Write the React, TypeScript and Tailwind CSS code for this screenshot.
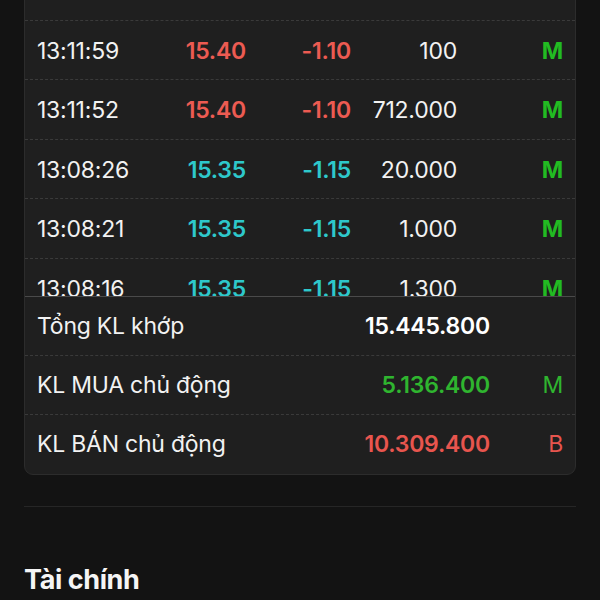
import React from 'react'

type Trade = {
    time: string
    price: string
    change: string
    volume: string
    side: string
    tone: 'down' | 'floor'
}

const trades: Trade[] = [
    { time: '13:11:59', price: '15.40', change: '-1.10', volume: '100', side: 'M', tone: 'down' },
    { time: '13:11:52', price: '15.40', change: '-1.10', volume: '712.000', side: 'M', tone: 'down' },
    { time: '13:08:26', price: '15.35', change: '-1.15', volume: '20.000', side: 'M', tone: 'floor' },
    { time: '13:08:21', price: '15.35', change: '-1.15', volume: '1.000', side: 'M', tone: 'floor' },
    { time: '13:08:16', price: '15.35', change: '-1.15', volume: '1.300', side: 'M', tone: 'floor' },
]

function TradeRow({ time, price, change, volume, side, tone }: Trade) {
    const color = tone === 'down' ? 'text-[#ec5b52]' : 'text-[#2ec8cb]'
    return (
        <div className="flex items-center h-[59.5px] shrink-0 px-[12px] pt-[2px] border-b border-dashed border-[#3a3a3a]">
            <div className="w-[101px] text-[#f2f2f2]">{time}</div>
            <div className={`w-[108px] text-right font-semibold ${color}`}>{price}</div>
            <div className={`w-[105px] text-right font-semibold ${color}`}>{change}</div>
            <div className="w-[106px] text-right text-[#f2f2f2]">{volume}</div>
            <div className="flex-1 text-right font-bold text-[#22bb22]">{side}</div>
        </div>
    )
}

function SummaryRow({
    label,
    value,
    valueColor,
    tag,
    tagColor,
    last,
}: {
    label: string
    value: string
    valueColor: string
    tag?: string
    tagColor?: string
    last?: boolean
}) {
    return (
        <div
            className={`flex items-center h-[59px] px-[12px] ${
                last ? '' : 'border-b border-dashed border-[#3a3a3a]'
            }`}
        >
            <div className="flex-1 text-[#f2f2f2]">{label}</div>
            <div className={`font-semibold ${valueColor}`}>{value}</div>
            <div className={`w-[73px] text-right ${tagColor ?? ''}`}>{tag}</div>
        </div>
    )
}

export default function App() {
    return (
        <div
            className="w-[600px] h-[600px] overflow-hidden bg-[#131313] px-[24px]"
            style={{ fontFamily: 'Inter, "Noto Sans", sans-serif' }}
        >
            <div className="-mt-[40px] bg-[#1f1f1f] rounded-[9px] border border-[#2c2c2c] text-[23px] tracking-[-0.01em] overflow-hidden">
                {/* Matched trades list, scrolled so the first row sits above the fold */}
                <div className="h-[335px] overflow-hidden flex flex-col">
                    <div className="h-[59.5px] shrink-0 border-b border-dashed border-[#3a3a3a]" />
                    {trades.map((t) => (
                        <TradeRow key={t.time} {...t} />
                    ))}
                </div>

                {/* Totals */}
                <div className="border-t border-[#4a4a4a]">
                    <SummaryRow label="Tổng KL khớp" value="15.445.800" valueColor="text-white" />
                    <SummaryRow
                        label="KL MUA chủ động"
                        value="5.136.400"
                        valueColor="text-[#2fb52f]"
                        tag="M"
                        tagColor="text-[#2fb52f]"
                    />
                    <SummaryRow
                        label="KL BÁN chủ động"
                        value="10.309.400"
                        valueColor="text-[#e8554e]"
                        tag="B"
                        tagColor="text-[#e8554e]"
                        last
                    />
                </div>
            </div>

            <div className="mt-[31px] h-px bg-[#262626]" />

            <h2 className="mt-[53px] text-[27px] font-bold text-[#f5f5f5] tracking-[-0.015em]">
                Tài chính
            </h2>
        </div>
    )
}
